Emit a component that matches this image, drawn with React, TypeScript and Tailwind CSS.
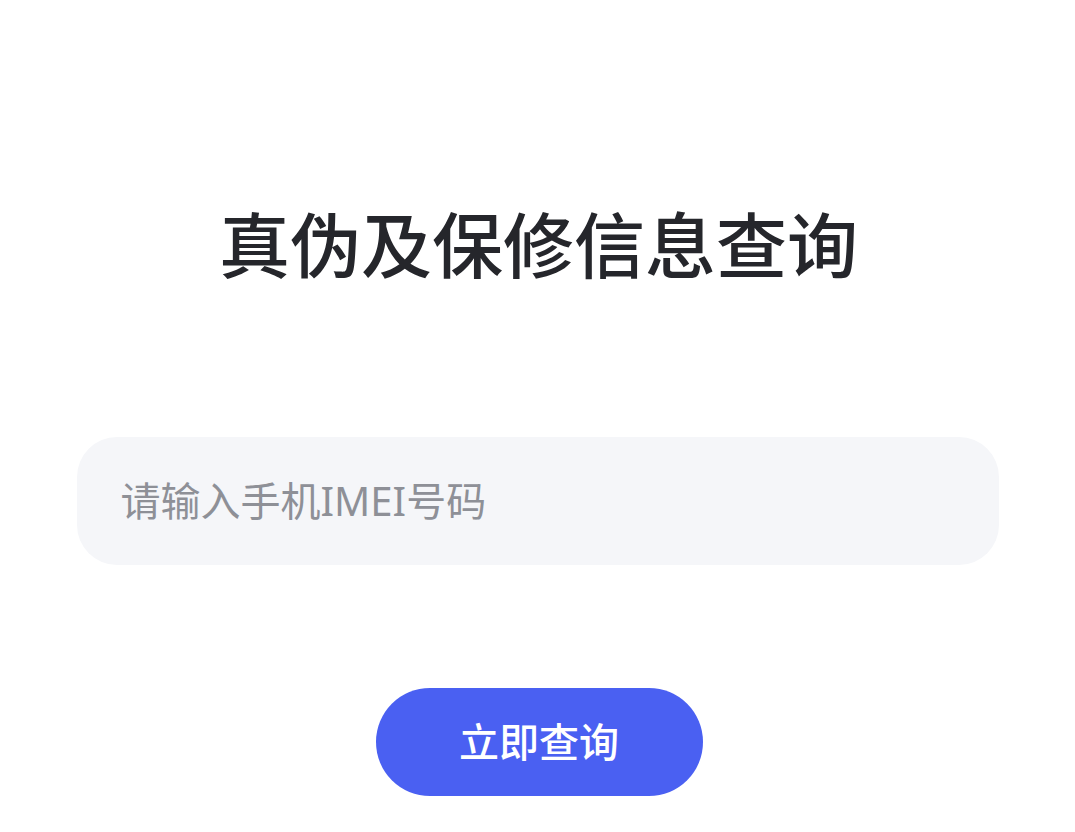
export default function App() {
  return (
    <div
      className="flex min-h-[832px] w-full flex-col items-center bg-white pt-[209px]"
      style={{ fontFamily: '"Noto Sans", "Noto Sans CJK SC", sans-serif' }}
    >
      <h1 className="ml-[2px] h-[72px] text-[71px] font-medium leading-[72px] text-[#25262b]">
        真伪及保修信息查询
      </h1>

      <div className="mt-[156px] flex h-[128px] w-[922px] items-center rounded-[40px] bg-[#f5f6f9] px-[44px]">
        <input
          type="text"
          placeholder="请输入手机IMEI号码"
          className="w-full bg-transparent text-[40px] text-[#25262b] outline-none placeholder:text-[#8e9097]"
        />
      </div>

      <button
        type="button"
        className="ml-[3px] mt-[123px] flex h-[108px] w-[327px] items-center justify-center rounded-full bg-[#4a60f2] text-[40px] font-medium text-white"
      >
        立即查询
      </button>
    </div>
  );
}
